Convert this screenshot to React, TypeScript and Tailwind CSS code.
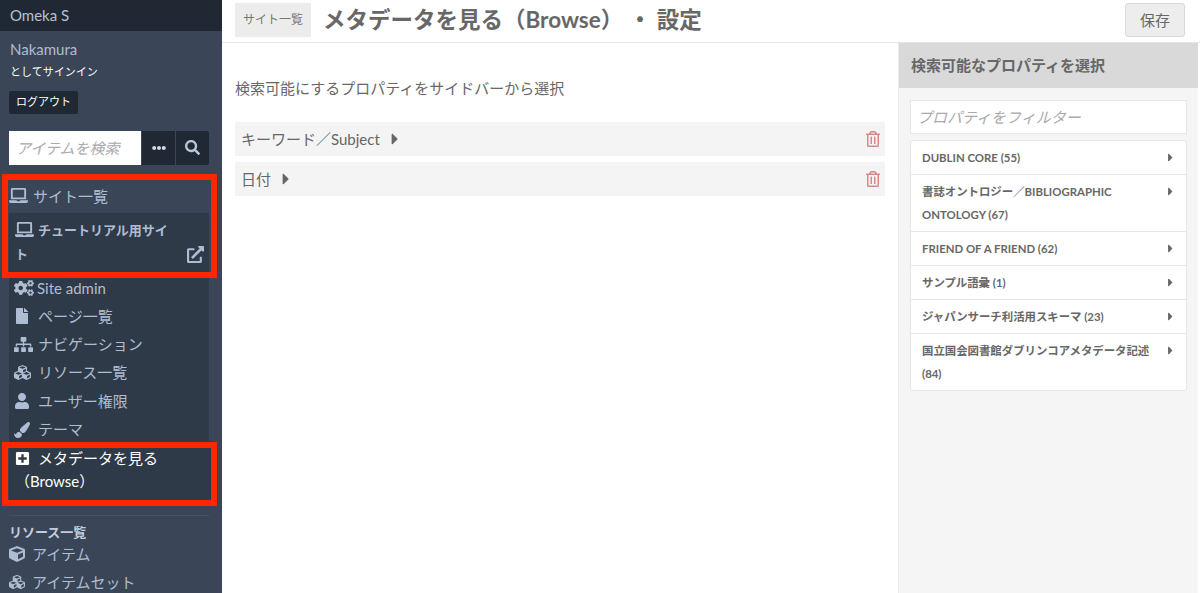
import React from "react";
import {
  FaCaretRight,
  FaCogs,
  FaCube,
  FaCubes,
  FaEllipsisH,
  FaExternalLinkAlt,
  FaFile,
  FaLaptop,
  FaPaintBrush,
  FaPlusSquare,
  FaRegTrashAlt,
  FaSearch,
  FaSitemap,
  FaUser,
} from "react-icons/fa";

const siteNav = [
  { label: "ページ一覧", icon: FaFile, size: 16 },
  { label: "ナビゲーション", icon: FaSitemap, size: 19 },
  { label: "リソース一覧", icon: FaCubes, size: 17 },
  { label: "ユーザー権限", icon: FaUser, size: 16 },
  { label: "テーマ", icon: FaPaintBrush, size: 16 },
];

const vocabularies = [
  "DUBLIN CORE (55)",
  "書誌オントロジー／BIBLIOGRAPHIC ONTOLOGY (67)",
  "FRIEND OF A FRIEND (62)",
  "サンプル語彙 (1)",
  "ジャパンサーチ利活用スキーマ (23)",
  "国立国会図書館ダブリンコアメタデータ記述 (84)",
];

const Sidebar = () => (
  <aside className="w-[222px] shrink-0 h-full overflow-hidden bg-[#3a4657] text-[#aebdd3] text-[15px] relative">
    <div className="h-[31px] bg-[#1f2833] pl-[10px] leading-[30px] text-[15px] text-[#b4c2d6]">Omeka S</div>

    <div className="pl-[10px] pt-[7px]">
      <div className="h-[22px] leading-[22px] text-[15px]">Nakamura</div>
      <div className="h-[22px] mt-[1px] leading-[22px] text-[11px] text-white">としてサインイン</div>
    </div>

    <div className="pl-[9px] mt-[6px]">
      <button className="h-[23px] w-[69px] rounded-[2px] bg-[#1f2833] text-[11px] text-white">ログアウト</button>
    </div>

    <div className="flex ml-[9px] w-[200px] mt-[17px] h-[34px] gap-px">
      <div className="w-[132px] bg-white pl-[7px] leading-[34px] text-[15px] italic text-[#aaaaaa]">アイテムを検索</div>
      <div className="w-[33px] bg-[#1f2833] flex items-center justify-center text-white">
        <FaEllipsisH size={14} className="text-[#d5dbe4]" />
      </div>
      <div className="w-[33px] rounded-r-[2px] bg-[#1f2833] flex items-center justify-center">
        <FaSearch size={15} className="text-[#b9c7da]" />
      </div>
    </div>

    <div className="flex items-center gap-[5px] pl-[9px] mt-[19px] h-[24px]">
      <FaLaptop size={19} />
      <span>サイト一覧</span>
    </div>

    <div className="ml-[9px] w-[200px] mt-[5px] bg-[#2f3a48] h-[57px] pl-[6px] pt-[5px] relative text-[13px] font-bold leading-[24px]">
      <div className="w-[160px]">
        <FaLaptop size={19} className="inline-block mr-[4px] align-[-4px]" />
        チュートリアル用サイト
      </div>
      <FaExternalLinkAlt size={17} className="absolute right-[5px] top-[33px]" />
    </div>

    <div className="ml-[9px] w-[200px] bg-[#2f3a48] pt-[4px] h-[171px]">
      <div className="flex items-center h-[28px] pl-[5px]">
        <FaCogs size={20} className="mr-[3px]" />
        <span>Site admin</span>
      </div>
      {siteNav.map((item) => (
        <div key={item.label} className="flex items-center h-[28.4px] pl-[5px]">
          <span className="w-[24px] shrink-0">
            <item.icon size={item.size} />
          </span>
          <span>{item.label}</span>
        </div>
      ))}
    </div>

    <div className="mx-[9px] h-[64px] bg-[#2f3a48] pl-[6px] pt-[6px] leading-[23.5px] text-white">
      <FaPlusSquare size={15} className="inline-block mr-[8px] align-[-2px]" />
      メタデータを見る
      <div>（Browse）</div>
    </div>

    <div className="mx-[9px] w-[200px] mt-[10px] border-t border-[#465365] pt-[7px] text-[13px] font-bold leading-[18px] text-[#c2cede]">
      リソース一覧
    </div>
    <div className="flex items-center gap-[7px] pl-[9px] h-[28px] mt-[-1px]">
      <FaCube size={16} />
      <span>アイテム</span>
    </div>
    <div className="flex items-center gap-[7px] pl-[9px] h-[28px]">
      <FaCubes size={16} />
      <span>アイテムセット</span>
    </div>

    {/* red annotation boxes */}
    <div className="absolute left-[2px] top-[174px] w-[215px] h-[104px] border-[6px] border-[#ff2600]" />
    <div className="absolute left-[2px] top-[442px] w-[215px] h-[64px] border-[6px] border-[#ff2600]" />
  </aside>
);

const PropertyRow = ({ label }: { label: string }) => (
  <div className="flex items-center justify-between h-[34px] bg-[#f4f4f4] pl-[6px] pr-[4px]">
    <span className="flex items-center gap-[6px]">
      {label}
      <FaCaretRight size={18} />
    </span>
    <FaRegTrashAlt size={16} className="text-[#d58a8a]" />
  </div>
);

const App = () => {
  return (
    <div className="flex w-[1200px] h-[593px] overflow-hidden bg-white font-[Lato,'Noto_Sans_CJK_JP',sans-serif] text-[#676767]">
      <Sidebar />
      <main className="flex-1 flex flex-col min-w-0">
        <header className="h-[43px] shrink-0 border-b border-[#e6e6e6] flex items-start pl-[13px] pr-[15px] pt-[3px]">
          <div className="h-[34px] w-[76px] bg-[#ececec] text-center text-[12px] leading-[34px] text-[#777777]">サイト一覧</div>
          <h1 className="ml-[12px] text-[22.5px] font-bold leading-[34px] text-[#676767] whitespace-nowrap">
            メタデータを見る（Browse） ・ 設定
          </h1>
          <button className="ml-auto h-[34px] w-[60px] rounded-[3px] border border-[#d9d9d9] bg-[#ededed] text-[15px] text-[#676767]">保存</button>
        </header>

        <div className="flex-1 flex min-h-0">
          <section className="w-[676px] pl-[13px] pr-[13px] text-[15px]">
            <p className="mt-[34px] leading-[23px]">検索可能にするプロパティをサイドバーから選択</p>
            <div className="mt-[22px] flex flex-col gap-[6px]">
              <PropertyRow label="キーワード／Subject" />
              <PropertyRow label="日付" />
            </div>
          </section>

          <section className="w-[300px] bg-[#f5f5f5] border-l border-[#ececec]">
            <h3 className="h-[45px] bg-[#d9d9d9] pl-[12px] text-[15px] font-bold leading-[44px]">検索可能なプロパティを選択</h3>
            <div className="px-[11px] pt-[12px]">
              <div className="h-[34px] border border-[#e6e6e6] bg-white pl-[6px] text-[15px] italic leading-[32px] text-[#aaaaaa]">
                プロパティをフィルター
              </div>
              <ul className="mt-[6px] rounded-[3px] border border-[#e6e6e6] bg-white text-[11.4px] font-bold leading-[23px]">
                {vocabularies.map((name, i) => (
                  <li key={name} className={`flex justify-between pl-[11px] pr-[9px] py-[5px] ${i > 0 ? "border-t border-[#e6e6e6]" : ""}`}>
                    <span className="w-[232px]">{name}</span>
                    <FaCaretRight size={13} className="mt-[5px] shrink-0" />
                  </li>
                ))}
              </ul>
            </div>
          </section>
        </div>
      </main>
    </div>
  );
};

export default App;
